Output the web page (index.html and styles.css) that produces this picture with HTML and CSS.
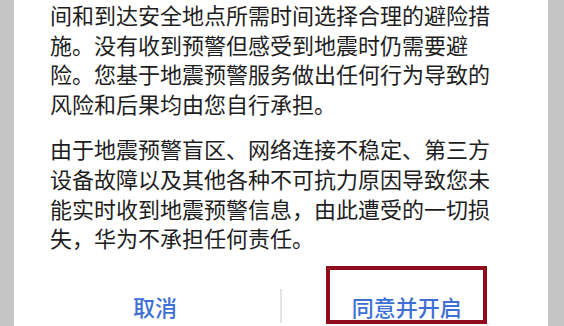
FILE: index.html
```html
<!DOCTYPE html>
<html lang="zh-CN">
<head>
<meta charset="utf-8">
<title>地震预警</title>
<link rel="stylesheet" href="styles.css">
</head>
<body>
<div class="screen">
  <div class="dialog">
    <div class="content">
      <p class="para first">
        <span class="line">间和到达安全地点所需时间选择合理的避险措</span>
        <span class="line">施。没有收到预警但感受到地震时仍需要避</span>
        <span class="line">险。您基于地震预警服务做出任何行为导致的</span>
        <span class="line">风险和后果均由您自行承担。</span>
      </p>
      <p class="para">
        <span class="line">由于地震预警盲区、网络连接不稳定、第三方</span>
        <span class="line">设备故障以及其他各种不可抗力原因导致您未</span>
        <span class="line">能实时收到地震预警信息，由此遭受的一切损</span>
        <span class="line">失，华为不承担任何责任。</span>
      </p>
    </div>
    <div class="actions">
      <button class="btn" type="button">取消</button>
      <span class="divider"></span>
      <div class="btn-wrap">
        <button class="btn btn-confirm" type="button">同意并开启</button>
        <span class="highlight"></span>
      </div>
    </div>
  </div>
</div>
</body>
</html>
```
FILE: styles.css
```css
html, body {
  margin: 0;
  padding: 0;
}
body {
  background: #c5c5c5;
  font-family: "Noto Sans CJK SC", "Noto Sans", sans-serif;
  overflow: hidden;
}
.screen {
  width: 564px;
  height: 326px;
  display: flex;
  overflow: hidden;
}
.dialog {
  margin-left: 14px;
  width: 534px;
  height: 400px;
  background: #ffffff;
  display: flex;
  flex-direction: column;
}
.content {
  padding: 0 36px;
}
.para {
  margin: 16px 0 0;
  font-size: 22px;
  line-height: 29.6px;
  color: #1e1e1e;
}
.para.first {
  margin-top: 0;
}
.line {
  display: block;
  white-space: nowrap;
}
.actions {
  margin-top: 15px;
  padding: 0 16px;
  height: 76px;
  display: flex;
  align-items: center;
}
.btn {
  flex: 1;
  height: 76px;
  border: 0;
  background: transparent;
  padding: 0;
  font-family: inherit;
  font-size: 22px;
  font-weight: 500;
  line-height: 22px;
  color: #3d6fd5;
}
.btn-wrap {
  flex: 1;
  display: flex;
  position: relative;
  height: 76px;
}
.divider {
  width: 1.5px;
  height: 34px;
  background: #e4e4e4;
}
.highlight {
  position: absolute;
  left: 44px;
  top: -2px;
  width: 161px;
  height: 58px;
  box-sizing: border-box;
  border: 4px solid #8e0c1c;
}
```
